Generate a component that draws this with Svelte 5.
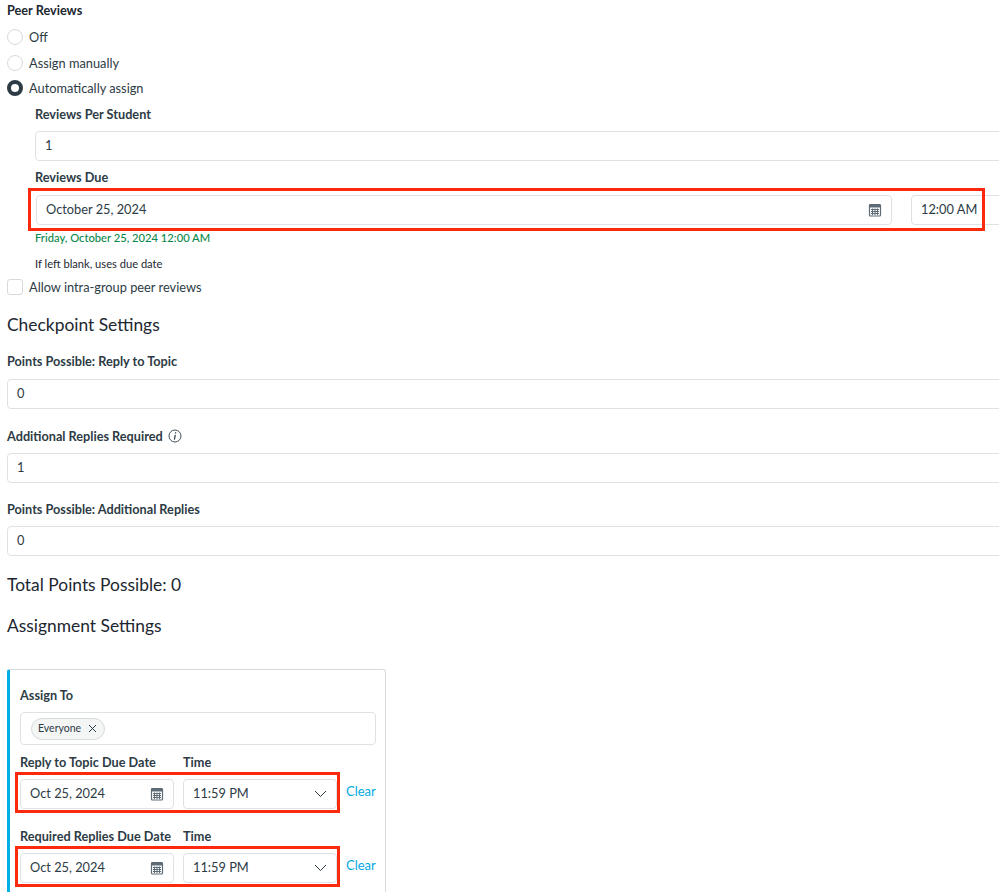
<script>
  const radios = [
    { label: 'Off', checked: false },
    { label: 'Assign manually', checked: false },
    { label: 'Automatically assign', checked: true }
  ];
  const dueRows = [
    { label: 'Reply to Topic Due Date' },
    { label: 'Required Replies Due Date' }
  ];
</script>

{#snippet calendar()}
  <svg class="cal" width="14" height="14" viewBox="0 0 14 14">
    <rect x="1.5" y="1.5" width="11" height="11.5" rx="1" fill="none" stroke="#5c6b76" stroke-width="1.2" />
    <rect x="1.5" y="1.5" width="11" height="3" fill="#5c6b76" />
    <path d="M3 6.5h8M3 8.5h8M3 10.5h8M4.5 5.5v6.5M7 5.5v6.5M9.5 5.5v6.5" stroke="#5c6b76" stroke-width="1" />
  </svg>
{/snippet}

<main class="page">
  <div class="label first">Peer Reviews</div>
  <div class="radios">
    {#each radios as r}
      <div class="radio-row">
        <span class="radio" class:checked={r.checked}></span>
        <span>{r.label}</span>
      </div>
    {/each}
  </div>

  <section class="nested">
    <div class="label per-student">Reviews Per Student</div>
    <div class="input wide per-input">1</div>
    <div class="label due-label">Reviews Due</div>
    <div class="due-row">
      <div class="input due-date">October 25, 2024 {@render calendar()}</div>
      <div class="input due-time">12:00 AM</div>
      <span class="mark mark-top"></span>
    </div>
    <div class="green">Friday, October 25, 2024 12:00 AM</div>
    <div class="hint">If left blank, uses due date</div>
  </section>

  <div class="check-row">
    <span class="checkbox"></span>
    <span>Allow intra-group peer reviews</span>
  </div>

  <h2 class="checkpoint">Checkpoint Settings</h2>
  <div class="label pp1">Points Possible: Reply to Topic</div>
  <div class="input wide field">0</div>
  <div class="label pp2">
    Additional Replies Required
    <svg class="info" width="14" height="14" viewBox="0 0 14 14">
      <circle cx="7" cy="7" r="6" fill="none" stroke="#2d3b45" stroke-width="0.9" />
      <path d="M7.6 3.3v1.2M7.3 5.9 6.4 10.6" stroke="#2d3b45" stroke-width="1.2" fill="none" />
    </svg>
  </div>
  <div class="input wide field">1</div>
  <div class="label pp3">Points Possible: Additional Replies</div>
  <div class="input wide field">0</div>

  <h2 class="total">Total Points Possible: 0</h2>
  <h2 class="assign-head">Assignment Settings</h2>

  <section class="card">
    <div class="label">Assign To</div>
    <div class="assign-box">
      <span class="chip">Everyone
        <svg width="9" height="9" viewBox="0 0 9 9"><path d="M1 1l7 7M8 1 1 8" stroke="#2d3b45" stroke-width="1" /></svg>
      </span>
    </div>
    {#each dueRows as row, i}
      <div class="due-labels" class:second={i === 1}>
        <div class="label col-date">{row.label}</div>
        <div class="label">Time</div>
      </div>
      <div class="pick-row">
        <div class="input pick-date">Oct 25, 2024 {@render calendar()}</div>
        <div class="input pick-time">11:59 PM
          <svg width="13" height="8" viewBox="0 0 13 8"><path d="M1 1l5.5 5.5L12 1" fill="none" stroke="#2d3b45" stroke-width="1" /></svg>
        </div>
        <span class="clear">Clear</span>
        <span class="mark mark-pick"></span>
      </div>
    {/each}
  </section>
</main>

<style>
  :global(body) {
    margin: 0;
    background: #fff;
    overflow: hidden;
  }

  .page {
    width: 999px;
    height: 892px;
    overflow: hidden;
    box-sizing: border-box;
    padding-left: 7px;
    font-family: Lato, sans-serif;
    font-size: 12.8px;
    color: #2d3b45;
  }

  .label {
    font-weight: 700;
    font-size: 12.7px;
    line-height: 16px;
    color: #2d3b45;
    white-space: nowrap;
  }

  .first {
    padding-top: 2px;
    color: #1c2730;
  }

  .radios {
    display: flex;
    flex-direction: column;
    gap: 9.5px;
    padding-top: 11px;
  }
  .radio-row {
    display: flex;
    align-items: center;
    gap: 6px;
    height: 16px;
  }

  .radio {
    width: 16px;
    height: 16px;
    box-sizing: border-box;
    border-radius: 50%;
    border: 1px solid #d5dadd;
    background: #fff;
  }
  .radio.checked {
    border: 4.5px solid #2d3b45;
  }

  .nested {
    padding-left: 28px;
  }

  .input {
    box-sizing: border-box;
    border: 1px solid #dfe2e4;
    border-radius: 4px;
    height: 30px;
    display: flex;
    align-items: center;
    padding: 0 0 2px 9px;
    font-size: 12.8px;
    background: #fff;
    position: relative;
    white-space: nowrap;
  }
  .wide {
    width: 1040px;
  }

  .per-student { margin-top: 10px; }
  .per-input { margin-top: 9px; }
  .due-label { margin-top: 8px; }

  .due-row {
    display: flex;
    gap: 19px;
    position: relative;
    margin-top: 10px;
    margin-left: 1px;
  }
  .due-date {
    width: 856px;
    flex: none;
  }
  .due-date .cal {
    position: absolute;
    right: 9px;
    top: 7px;
  }
  .due-time {
    width: 140px;
    flex: none;
  }

  .mark {
    position: absolute;
    box-sizing: border-box;
    border: 3px solid #fb2a0c;
    pointer-events: none;
  }
  .mark-top {
    left: -8px;
    top: -7px;
    width: 957px;
    height: 43px;
  }

  .green {
    color: #0b874b;
    font-size: 11.2px;
    font-weight: 500;
    line-height: 14px;
    margin-top: 6px;
  }
  .hint {
    color: #1c2730;
    font-size: 11.15px;
    line-height: 14px;
    margin-top: 12px;
  }

  .check-row {
    display: flex;
    align-items: center;
    gap: 6px;
    margin-top: 8px;
    height: 16px;
  }
  .checkbox {
    width: 16px;
    height: 16px;
    box-sizing: border-box;
    border: 1px solid #d5dadd;
    border-radius: 3px;
  }

  h2 {
    margin: 0;
    font-weight: 400;
    font-size: 17.4px;
    line-height: 22px;
    color: #1c2730;
  }
  .checkpoint { margin-top: 19px; }
  .pp1 { margin-top: 17px; }
  .pp1 + .field { margin-top: 10px; }
  .pp2 {
    margin-top: 19px;
    display: flex;
    align-items: center;
    gap: 5px;
  }
  .pp3 { margin-top: 18px; }
  .field { margin-top: 9px; }
  .total { margin-top: 18px; }
  .assign-head { margin-top: 19px; }

  .card {
    box-sizing: border-box;
    width: 379px;
    height: 260px;
    margin-top: 32px;
    border: 1px solid #d5dadd;
    border-left: 3px solid #00b0e4;
    border-radius: 3px;
    padding: 17px 9px 0 10px;
  }

  .assign-box {
    box-sizing: border-box;
    height: 33px;
    margin-top: 9px;
    border: 1px solid #dfe2e4;
    border-radius: 4px;
    display: flex;
    align-items: center;
    padding-left: 10px;
  }
  .chip {
    display: flex;
    align-items: center;
    gap: 7px;
    box-sizing: border-box;
    height: 22px;
    width: 74px;
    padding: 0 0 1px 6px;
    background: #f4f5f5;
    border: 1px solid #d5dadd;
    border-radius: 11px;
    font-size: 10.5px;
  }

  .due-labels {
    display: flex;
    margin-top: 9px;
  }
  .due-labels.second {
    margin-top: 19px;
  }
  .col-date {
    width: 163px;
  }

  .pick-row {
    display: flex;
    position: relative;
    gap: 9px;
    margin-top: 9px;
  }
  .pick-date {
    width: 154px;
    flex: none;
  }
  .pick-date .cal {
    position: absolute;
    right: 9px;
    top: 7px;
  }
  .pick-time {
    width: 154px;
    flex: none;
  }
  .pick-time svg {
    position: absolute;
    right: 9px;
    top: 10px;
  }
  .clear {
    color: #00a9e0;
    font-size: 13px;
    line-height: 16px;
    margin-top: 4px;
  }
  .mark-pick {
    left: -5px;
    top: -7px;
    width: 325px;
    height: 41px;
  }
</style>
